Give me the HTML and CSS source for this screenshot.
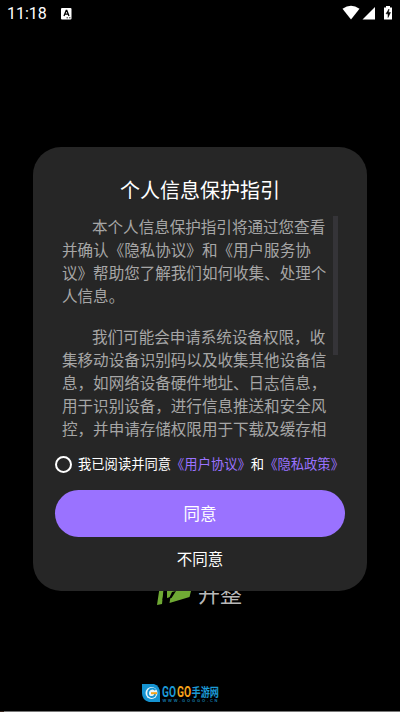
FILE: index.html
```html
<!DOCTYPE html>
<html lang="zh-CN">
<head>
<meta charset="utf-8">
<title>个人信息保护指引</title>
<link rel="stylesheet" href="styles.css">
</head>
<body>
<div class="screen">
  <header class="status">
    <span class="clock">11:18</span>
    <svg class="input-icon" width="11" height="12" viewBox="0 0 11 12"><rect width="10.5" height="11.5" rx="1" fill="#fff"/><path d="M3 8L5.2 2.5H5.8L8 8M3.8 6.2H7.2" fill="none" stroke="#000" stroke-width="1.3"/><path d="M5.5 9.8H7M8 9.8H9.5" stroke="#000" stroke-width=".8"/></svg>
    <svg class="system-icons" width="52" height="16" viewBox="0 0 52 16"><path d="M.5 3.8Q9 -2.2 17.5 3.8L9 14.5Z" fill="#fff"/><path d="M20.5 14.5L33 2V14.5Z" fill="#fff"/><path d="M42 2.5H44V1H48V2.5H50V14.5H42Z" fill="#fff"/><path d="M47 4L44 8.8H46V12.5L48.5 7.5H46.6Z" fill="#000" stroke="#000" stroke-width=".5"/></svg>
  </header>
  <div class="brand">
    <svg width="38" height="38" viewBox="0 0 38 38"><path d="M3 16H7L5 35L0 36ZM10 16H35.500L32.500 28L12.500 34L13.500 28L10 29Z" fill="#6fa934"/><path d="M7 22H9.500L8.500 30L5.500 31Z" fill="#000"/><path d="M12 29.500L15 23L19 22L14.500 29Z" fill="#000"/></svg>
    <span>开整</span>
  </div>
  <footer class="site">
    <svg width="78" height="20" viewBox="0 0 78 20">
      <path d="M0 0H12Q18 2 18 9V18H7Q0 16 0 9Z" fill="#1593d1"/><circle cx="9.5" cy="9" r="6" fill="#e6f4fa"/><path d="M13.5 6Q9 3 6.5 7Q5 12 9 13Q13 13 13 10" fill="none" stroke="#1593d1" stroke-width="1.8"/><path d="M9 8.2H15V10.2H9Z" fill="#f5a31b"/>
      <text class="latin blue" x="20" y="13" textLength="14" lengthAdjust="spacingAndGlyphs">GO</text>
      <text class="latin orange" x="35" y="13" textLength="14" lengthAdjust="spacingAndGlyphs">GO</text>
      <text class="han blue" x="49.500" y="12.500" textLength="27.500" lengthAdjust="spacingAndGlyphs">手游网</text>
      <text class="url" x="20.500" y="18" textLength="55">WWW.GOGGO.CN</text>
    </svg>
  </footer>
  <div class="edge"><i></i></div>

  <section class="dialog">
    <h1>个人信息保护指引</h1>
    <div class="scroll">
      <div class="copy">
        <p>本个人信息保护指引将通过您查看<br>并确认《隐私协议》和《用户服务协<br>议》帮助您了解我们如何收集、处理个<br>人信息。</p>
        <p>我们可能会申请系统设备权限，收<br>集移动设备识别码以及收集其他设备信<br>息，如网络设备硬件地址、日志信息，<br>用于识别设备，进行信息推送和安全风<br>控，并申请存储权限用于下载及缓存相</p>
      </div>
      <div class="thumb"></div>
    </div>
    <div class="consent">
      <span class="radio"></span>
      <span>我已阅读并同意<a>《用户协议》</a>和<a>《隐私政策》</a></span>
    </div>
    <button class="agree">同意</button>
    <button class="decline">不同意</button>
  </section>
</div>
</body>
</html>
```
FILE: styles.css
```css
* { box-sizing: border-box; }
body { margin: 0; background: #000; font-family: "Noto Sans CJK SC", sans-serif; }
.screen { position: relative; width: 400px; height: 712px; overflow: hidden; display: flex; flex-direction: column; background: #000; color: #fff; }
.status { height: 28px; display: flex; align-items: center; padding: 0 6px 0 7px; flex: none; }
.clock { font: 400 16px/28px Roboto, sans-serif; width: 54px; }
.system-icons { margin-left: auto; margin-top: -2px; }
.brand { margin-top: 541px; padding-left: 157px; height: 38px; display: flex; gap: 3px; flex: none; }
.brand span { font-size: 22px; line-height: 47px; color: #b8b8b8; white-space: nowrap; }
.site { margin-top: 77px; padding-left: 142px; height: 20px; display: flex; flex: none; }
.latin { font: 700 15px Roboto, sans-serif; }
.han { font-size: 12px; font-weight: 700; }
.blue { fill: #1c9ad6; }
.orange { fill: #f5a31b; }
.url { font: 700 4px "Liberation Sans", sans-serif; fill: #147aa9; }
.edge { margin-top: auto; height: 1px; background: #777; flex: none; }
.edge i { display: block; width: 4px; height: 1px; background: #36251d; }

.dialog { position: absolute; left: 33px; top: 147px; width: 334px; height: 444px; border-radius: 28px; background: #262626; padding: 28px 22px 0; display: flex; flex-direction: column; }
h1 { margin: 0; font-size: 20px; line-height: 29px; font-weight: 400; text-align: center; }
.scroll { margin-top: 11px; height: 228px; padding-left: 7px; display: flex; justify-content: space-between; overflow: hidden; flex: none; }
.copy { color: #a6a6a6; font-size: 15.56px; line-height: 23px; white-space: nowrap; }
.copy p { margin: 0 0 18px; text-indent: 30px; }
.thumb { width: 5px; height: 139px; margin: 1px 7px 0 0; background: #353438; }
.consent { display: flex; align-items: center; height: 20px; margin-top: 11px; gap: 6px; font-size: 13.3px; line-height: 20px; white-space: nowrap; flex: none; }
.radio { width: 17px; height: 17px; border: 2px solid #fff; border-radius: 50%; flex: none; }
.consent a { color: #9a72ff; }
button { border: 0; padding: 0 0 2px; color: #fff; font-family: inherit; flex: none; }
.agree { margin-top: 16px; height: 47px; width: 290px; border-radius: 24px; background: #9a72ff; font-size: 16.5px; }
.decline { height: 44px; background: none; font-size: 15.5px; }
```
